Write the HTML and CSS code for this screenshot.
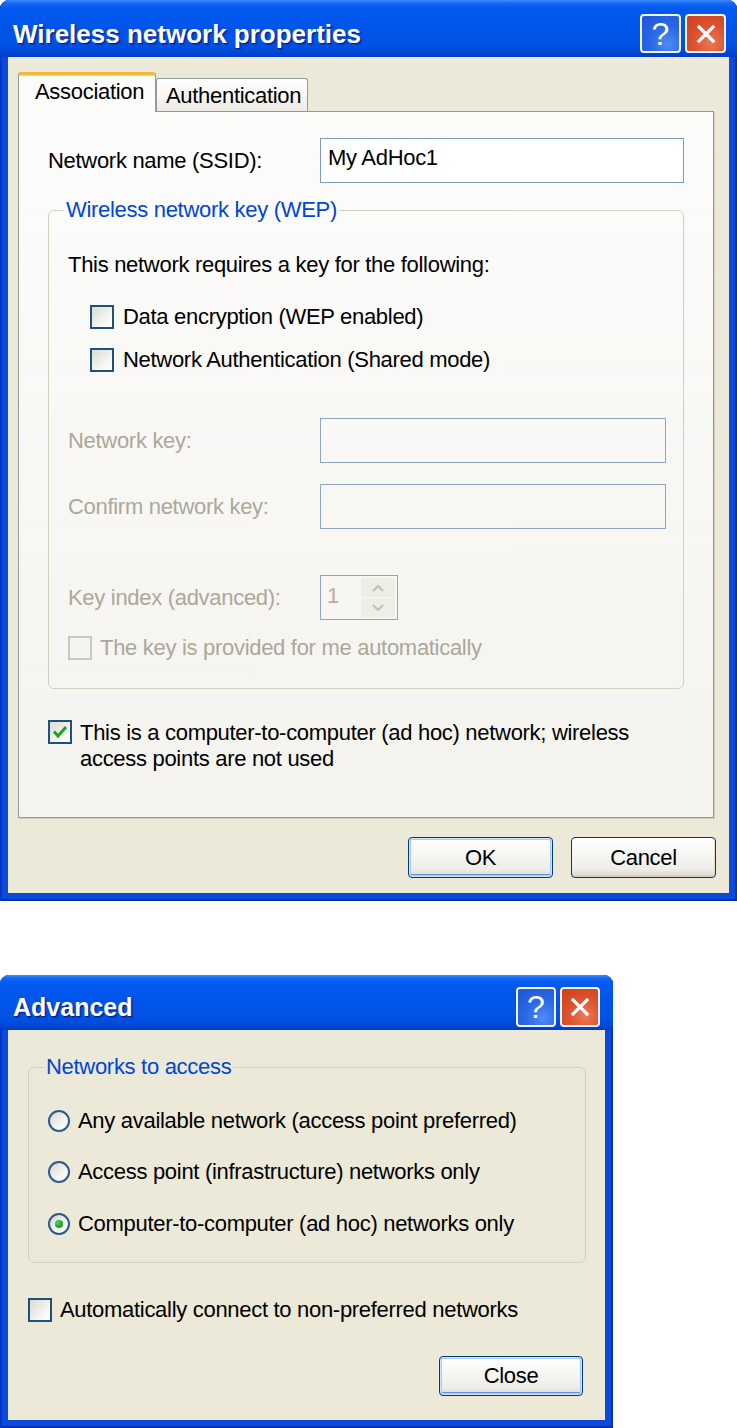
FILE: index.html
```html
<!DOCTYPE html>
<html>
<head>
<meta charset="utf-8">
<title>Wireless network properties</title>
<link rel="stylesheet" href="styles.css">
</head>
<body>
<div class="page">
  <div class="window w1">
    <div class="titlebar">
      <span class="title">Wireless network properties</span>
      <div class="tbtns">
        <span class="tb help">?</span>
        <span class="tb close"><svg width="22" height="22" viewBox="0 0 22 22"><path d="M4 4 L18 18 M18 4 L4 18" stroke="#fff" stroke-width="3.2" stroke-linecap="square" fill="none"/></svg></span>
      </div>
    </div>
    <div class="body">
      <div class="tabs">
        <div class="tab active">Association</div>
        <div class="tab">Authentication</div>
      </div>
      <div class="panel">
        <div class="row ssid">
          <span class="lbl">Network name (SSID):</span>
          <div class="input">My AdHoc1</div>
        </div>
        <fieldset class="group wep">
          <legend>Wireless network key (WEP)</legend>
          <p class="desc">This network requires a key for the following:</p>
          <div class="check indent r1"><span class="cb"></span><span>Data encryption (WEP enabled)</span></div>
          <div class="check indent r2"><span class="cb"></span><span>Network Authentication (Shared mode)</span></div>
          <div class="row field nk"><span class="lbl dis">Network key:</span><div class="input disabled"></div></div>
          <div class="row field ck"><span class="lbl dis">Confirm network key:</span><div class="input disabled"></div></div>
          <div class="row field ki">
            <span class="lbl dis">Key index (advanced):</span>
            <div class="spin">
              <span class="val">1</span>
              <div class="arrows">
                <span class="arr"><svg width="14" height="8" viewBox="0 0 14 8"><path d="M2 7 L7 2 L12 7" stroke="#C4C2B6" stroke-width="2" fill="none"/></svg></span>
                <span class="arr"><svg width="14" height="8" viewBox="0 0 14 8"><path d="M2 1 L7 6 L12 1" stroke="#C4C2B6" stroke-width="2" fill="none"/></svg></span>
              </div>
            </div>
          </div>
          <div class="check auto"><span class="cb disabled"></span><span class="dis">The key is provided for me automatically</span></div>
        </fieldset>
        <div class="check adhoc">
          <span class="cb"><svg width="20" height="20" viewBox="0 0 20 20"><path d="M4 9.5 L8 14 L16 5" stroke="#21A121" stroke-width="3" fill="none"/></svg></span>
          <span>This is a computer-to-computer (ad hoc) network; wireless<br>access points are not used</span>
        </div>
      </div>
      <div class="buttons">
        <button class="btn default">OK</button>
        <button class="btn">Cancel</button>
      </div>
    </div>
  </div>

  <div class="window w2">
    <div class="titlebar">
      <span class="title">Advanced</span>
      <div class="tbtns">
        <span class="tb help">?</span>
        <span class="tb close"><svg width="22" height="22" viewBox="0 0 22 22"><path d="M4 4 L18 18 M18 4 L4 18" stroke="#fff" stroke-width="3.2" stroke-linecap="square" fill="none"/></svg></span>
      </div>
    </div>
    <div class="body">
      <fieldset class="group nets">
        <legend>Networks to access</legend>
        <div class="radio ra"><span class="rb"></span><span>Any available network (access point preferred)</span></div>
        <div class="radio rb2"><span class="rb"></span><span>Access point (infrastructure) networks only</span></div>
        <div class="radio rc"><span class="rb checked"></span><span>Computer-to-computer (ad hoc) networks only</span></div>
      </fieldset>
      <div class="check autoconn"><span class="cb"></span><span>Automatically connect to non-preferred networks</span></div>
      <div class="buttons">
        <button class="btn close-btn">Close</button>
      </div>
    </div>
  </div>
</div>
</body>
</html>
```

FILE: styles.css
```css
* { box-sizing: border-box; }

body {
  margin: 0;
  background: #fff;
  font-family: "Liberation Sans", Arial, sans-serif;
  font-size: 22px;
  line-height: 26px;
  color: #000;
}

.page {
  display: flex;
  flex-direction: column;
  align-items: flex-start;
}

/* ---------- window frame ---------- */
.window {
  display: flex;
  flex-direction: column;
  padding: 0 8px 8px;
  background: #0B4BDB;
  border-radius: 9px 9px 0 0;
  box-shadow: inset 2px 0 #0A36C4, inset -2px 0 #0A30B8, inset 0 -2px #0A2EB0;
}
.w1 { width: 737px; }
.w2 { width: 613px; margin-top: 74px; }

.titlebar {
  margin: 0 -8px;
  display: flex;
  align-items: center;
  justify-content: space-between;
  padding: 10px 11px 0 13px;
  height: 57px;
  border-radius: 9px 9px 0 0;
  background: linear-gradient(#3D8DFF 0, #1469F6 3px, #0459EE 8px, #0055EA 40%, #0053E4 75%, #004AD9 90%, #003CC6 100%);
}
.w2 .titlebar { height: 55px; padding-top: 8px; padding-right: 13px; }

.title {
  color: #fff;
  font-weight: bold;
  font-size: 26px;
  text-shadow: 1px 1px 0 #0A1E8C, 2px 2px 1px rgba(10, 30, 140, 0.4);
}
.w2 .title { font-size: 25px; }

.tbtns { display: flex; gap: 4px; }
.tb {
  width: 41px;
  height: 39px;
  border: 2px solid #F2F4FF;
  border-radius: 4px;
  display: flex;
  align-items: center;
  justify-content: center;
  color: #fff;
  font-size: 32px;
}
.w2 .tb { width: 40px; height: 40px; }
.help {
  background: radial-gradient(circle at 70% 80%, #4F8BF8 0, #2A68E6 45%, #1E55D4 100%);
}
.close {
  background: radial-gradient(circle at 65% 75%, #EC7B55 0, #DE5330 45%, #C8401A 100%);
}

/* ---------- body ---------- */
.body {
  flex: 1;
  display: flex;
  flex-direction: column;
  background: #ECE9D8;
  letter-spacing: -0.3px;
}
.w1 .body { padding: 15px 13px 15px 10px; }
.w2 .body { padding: 24px 19px 24px 20px; }

/* ---------- tabs ---------- */
.tabs {
  display: flex;
  align-items: flex-end;
  height: 39px;
}
.tab {
  border: 1px solid #919B9C;
  border-bottom: none;
  border-radius: 3px 3px 0 0;
  white-space: nowrap;
}
.tab.active {
  position: relative;
  z-index: 1;
  width: 138px;
  height: 40px;
  margin-bottom: -1px;
  padding: 4px 0 0 16px;
  background: #FCFCFB;
  border-top: 3px solid #F6B83A;
  box-shadow: inset 0 1px #FFD66B;
}
.tab:not(.active) {
  width: 152px;
  height: 33px;
  padding: 4px 0 0 9px;
  background: linear-gradient(#FFFFFF, #F5F5F1 60%, #ECEBE5);
}

.panel {
  margin-right: 2px;
  border: 1px solid #919B9C;
  background: linear-gradient(#FCFCFB, #F4F3EE);
  padding: 0 29px 45px 29px;
  box-shadow: 1px 1px 0 #D0CEBF;
}

/* ---------- rows ---------- */
.row {
  display: flex;
  align-items: center;
}
.lbl { flex: none; }
.ssid { margin-top: 26px; }
.ssid .lbl { width: 272px; }
.field .lbl { width: 252px; }

.input {
  flex: 1;
  height: 45px;
  border: 1px solid #7F9DB9;
  background: #fff;
  padding: 6px 7px 0;
}
.input.disabled {
  background: transparent;
  border-color: #8EA6C2;
}

.dis { color: #ACA899; }

/* ---------- group box ---------- */
.group {
  margin: 0;
  border: 1px solid #D0D0BF;
  border-radius: 6px;
}
.group legend {
  margin-left: -4px;
  padding: 0 2px;
  color: #0046D5;
}
.wep {
  margin-top: 14px;
  padding: 0 17px 27px 19px;
}
.nets {
  padding: 0 19px 25px 19px;
}

.desc { margin: 29px 0 0; }

.check {
  display: flex;
  align-items: center;
  gap: 8px;
  height: 26px;
}
.check.indent { padding-left: 22px; gap: 9px; }
.r1 { margin-top: 26px; }
.r2 { margin-top: 17px; }
.nk { margin-top: 45px; }
.ck { margin-top: 21px; }
.ki { margin-top: 46px; }
.auto { margin-top: 15px; }

.adhoc {
  margin-top: 31px;
  height: auto;
  align-items: flex-start;
}

.cb {
  flex: none;
  width: 24px;
  height: 24px;
  border: 2px solid #1C5180;
  background: linear-gradient(135deg, #DCDBD4 0, #EFEFEB 50%, #FFFFFF 90%);
  display: flex;
  align-items: center;
  justify-content: center;
}
.cb.disabled {
  border-color: #CAC8BB;
  background: #F5F4F0;
}

/* spinner */
.spin {
  width: 78px;
  height: 45px;
  border: 1px solid #8EA6C2;
  display: flex;
  padding: 2px;
}
.spin .val {
  flex: 1;
  padding: 5px 0 0 4px;
  color: #C4A89E;
}
.spin .arrows {
  width: 34px;
  display: flex;
  flex-direction: column;
  gap: 1px;
}
.arr {
  flex: 1;
  background: #EEEDE6;
  display: flex;
  align-items: center;
  justify-content: center;
}

/* radios */
.radio {
  display: flex;
  align-items: center;
  gap: 8px;
  height: 26px;
}
.ra { margin-top: 28px; }
.rb2 { margin-top: 25px; }
.rc { margin-top: 26px; }
.rb {
  flex: none;
  width: 22px;
  height: 22px;
  border-radius: 50%;
  border: 2px solid #2C5A89;
  background: linear-gradient(135deg, #D8D8D2 0, #F0F0EC 50%, #FFFFFF 90%);
  display: flex;
  align-items: center;
  justify-content: center;
}
.rb.checked::after {
  content: "";
  width: 8px;
  height: 8px;
  border-radius: 50%;
  background: radial-gradient(circle at 35% 35%, #5FD25F, #21A121 60%, #1A8A1A);
}

.autoconn { margin-top: 34px; }

/* ---------- buttons ---------- */
.buttons {
  display: flex;
  justify-content: flex-end;
  gap: 18px;
}
.w1 .buttons { margin-top: 19px; }
.w2 .buttons { margin-top: 33px; padding-right: 3px; }

.btn {
  font: inherit;
  letter-spacing: inherit;
  color: #000;
  width: 145px;
  height: 41px;
  padding: 0;
  border: 1px solid #003C74;
  border-radius: 4px;
  background: linear-gradient(#FFFFFF 0, #F8F8F5 35%, #EEEDE8 80%, #DCD7CC 100%);
  box-shadow: inset 0 -2px #D6D0C5, inset -1px 0 #E2DED4;
}
.btn.default {
  box-shadow: inset 0 0 0 1px #CEE7FF, inset 0 0 0 2px #A9C8F3, inset 0 -3px #6B8EE6;
}
.close-btn {
  width: 144px;
  height: 40px;
  box-shadow: inset 0 0 0 1px #CEE7FF, inset 0 0 0 2px #A9C8F3, inset 0 -3px #6B8EE6;
}
```
